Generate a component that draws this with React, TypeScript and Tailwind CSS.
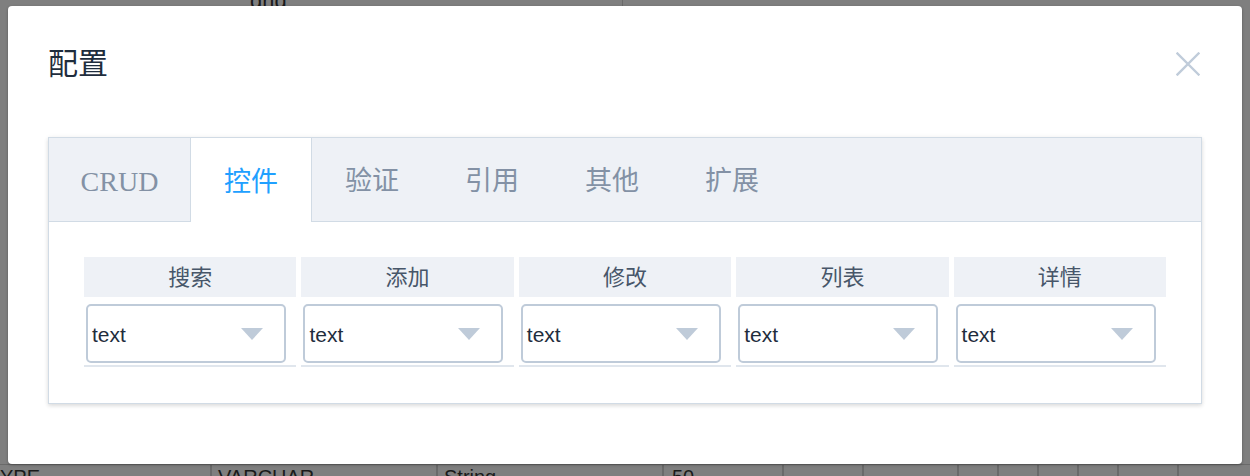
const tabs = ['CRUD', '控件', '验证', '引用', '其他', '扩展'];
const columns = ['搜索', '添加', '修改', '列表', '详情'];

function Caret() {
  return (
    <svg width="22" height="12" viewBox="0 0 22 12" aria-hidden>
      <path d="M0 0h22L11 12z" fill="#bfcbd9" />
    </svg>
  );
}

function CloseIcon() {
  return (
    <svg width="24" height="24" viewBox="0 0 24 24" aria-hidden>
      <path d="M1.5 1.5l21 21M22.5 1.5l-21 21" stroke="#c0ccda" strokeWidth="2.4" strokeLinecap="square" />
    </svg>
  );
}

function BackdropPage() {
  return (
    <div className="flex h-full flex-col justify-between text-[#1a1a1a]" style={{ fontFamily: '"Liberation Sans", Arial, sans-serif' }}>
      <div className="flex h-[6px] items-end overflow-hidden">
        <div className="ml-[78px] w-[150px] border-r border-[#6a6a6a]" />
        <div className="flex h-[6px] w-[395px] items-end border-r border-[#6a6a6a] pl-[22px]">
          <span className="-mb-[6px] text-[22px] leading-[22px]">grid</span>
        </div>
      </div>
      <div className="flex h-[12px] items-start overflow-hidden border-t border-[#6a6a6a] text-[20px] leading-[24px]">
        <div className="w-[212px] border-r-2 border-[#6a6a6a]">YPE</div>
        <div className="w-[226px] border-r-2 border-[#6a6a6a] pl-[6px]">VARCHAR</div>
        <div className="w-[226px] border-r-2 border-[#6a6a6a] pl-[6px]">String</div>
        <div className="w-[120px] border-r-2 border-[#6a6a6a] pl-[8px]">50</div>
        <div className="w-[80px] border-r-2 border-[#6a6a6a]">&nbsp;</div>
        <div className="w-[95px] border-r-2 border-[#6a6a6a]">&nbsp;</div>
        <div className="w-[40px] border-r-2 border-[#6a6a6a]">&nbsp;</div>
        <div className="w-[40px] border-r-2 border-[#6a6a6a]">&nbsp;</div>
        <div className="w-[40px] border-r-2 border-[#6a6a6a]">&nbsp;</div>
        <div className="w-[40px] border-r-2 border-[#6a6a6a]">&nbsp;</div>
        <div className="w-[60px] border-r-2 border-[#6a6a6a]">&nbsp;</div>
      </div>
    </div>
  );
}

export default function App() {
  return (
    <div
      className="relative h-[476px] w-[1250px] overflow-hidden bg-[#7f7f7f]"
      style={{ fontFamily: '"Liberation Serif", "Noto Sans CJK SC", serif' }}
    >
      <BackdropPage />

      <div className="absolute left-[8px] top-[6px] h-[458px] w-[1234px] rounded-[4px] bg-white shadow-[0_1px_3px_rgba(0,0,0,0.3)]">
        <header className="flex items-center justify-between pl-[40px] pr-[42px] pt-[38px]">
          <h2 className="text-[30px] leading-[40px] text-[#1f2d3d]">配置</h2>
          <button type="button" className="mt-[-1px]">
            <CloseIcon />
          </button>
        </header>

        <section className="mx-[40px] mt-[53px] border border-[#d1dbe5] bg-white shadow-[0_2px_4px_rgba(0,0,0,0.12),0_0_6px_rgba(0,0,0,0.04)]">
          <nav className="flex h-[84px] border-b border-[#d1dbe5] bg-[#eef1f6]">
            {tabs.map((t, i) =>
              i === 1 ? (
                <div
                  key={t}
                  className="-mb-px flex h-[84px] w-[122px] items-center justify-center border-x border-[#d1dbe5] bg-white pt-[4px] text-[27px] text-[#20a0ff]"
                >
                  {t}
                </div>
              ) : (
                <div
                  key={t}
                  className={`flex h-[83px] items-center justify-center pt-[4px] text-[27px] text-[#8391a5] ${
                    i === 0 ? 'w-[141px] text-[28px]' : 'w-[120px]'
                  }`}
                >
                  {t}
                </div>
              )
            )}
          </nav>

          <div className="px-[35px] pb-[36px] pt-[35px]">
            <div className="grid grid-cols-5 gap-x-[5px]">
              {columns.map((c) => (
                <div key={c} className="flex h-[40px] items-center justify-center bg-[#eef1f6] text-[22px] text-[#475669]">
                  {c}
                </div>
              ))}
              {columns.map((c) => (
                <div key={c + '-cell'} className="h-[70px] border-b-2 border-[#e0e6ed] pl-[2px] pt-[7px]">
                  <div
                    className="flex h-[59px] w-[200px] items-center justify-between rounded-[5px] border-2 border-[#bfcbd9] pl-[4px] pr-[21px] text-[21px] text-[#1f2d3d]"
                    style={{ fontFamily: '"Liberation Sans", Arial, sans-serif' }}
                  >
                    <span className="pt-[2px]">text</span>
                    <Caret />
                  </div>
                </div>
              ))}
            </div>
          </div>
        </section>
      </div>
    </div>
  );
}
